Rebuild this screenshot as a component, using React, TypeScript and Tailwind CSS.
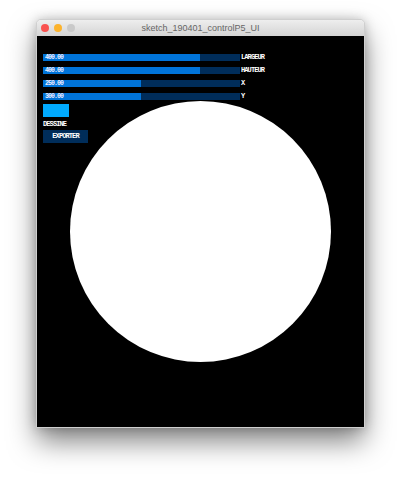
import React from 'react';

const SLIDERS = [
  { value: '400.00', label: 'LARGEUR', fill: 157 },
  { value: '400.00', label: 'HAUTEUR', fill: 157 },
  { value: '250.00', label: 'X', fill: 98 },
  { value: '300.00', label: 'Y', fill: 98 },
];

const labelText = "font-['Liberation_Mono',monospace] font-bold text-[7px] leading-[7px] tracking-[-0.9px] text-white";
const valueText = "font-['Liberation_Mono',monospace] font-bold text-[6.5px] leading-[7px] tracking-[-0.9px] text-[#eeeeff]";

const App = () => {
  return (
    <div className="w-[400px] h-[480px] bg-white overflow-hidden pt-[20px] pl-[37px]">
      {/* Window */}
      <div className="w-[327px] h-[407px] rounded-t-[4px] flex flex-col shadow-[0_14px_28px_rgba(0,0,0,0.5),0_0_12px_rgba(0,0,0,0.25)] outline outline-1 outline-[#cfcfcf]">
        {/* Title bar */}
        <div className="relative h-[16px] shrink-0 rounded-t-[4px] bg-gradient-to-b from-[#eeeeee] to-[#d4d4d4] flex items-center justify-center">
          <div className="absolute left-[4px] top-[4px] flex gap-[5px]">
            <span className="w-[8px] h-[8px] rounded-full bg-[#f9524f]" />
            <span className="w-[8px] h-[8px] rounded-full bg-[#fcb32c]" />
            <span className="w-[8px] h-[8px] rounded-full bg-[#c9c9c9]" />
          </div>
          <span className="font-['Liberation_Sans',sans-serif] text-[9px] leading-none text-[#666666]">
            sketch_190401_controlP5_UI
          </span>
        </div>

        {/* Canvas */}
        <div className="relative flex-1 bg-black pl-[6px] pt-[18px]">
          <div className="flex flex-col gap-[6px]">
            {SLIDERS.map((s) => (
              <div key={s.value + s.label} className="flex items-center gap-[1px] h-[7px]">
                <div className="w-[197px] h-[7px] bg-[#002d5a] relative">
                  <div className="h-full bg-[#0074d9]" style={{ width: s.fill }} />
                  <span className={`absolute left-[2px] top-0 ${valueText}`}>{s.value}</span>
                </div>
                <span className={labelText}>{s.label}</span>
              </div>
            ))}
          </div>

          <div className="mt-[4px] w-[26px] h-[13px] bg-[#00aaff]" />
          <div className={`mt-[4px] ${labelText}`}>DESSINE</div>
          <div className={`mt-[2px] w-[45px] h-[13px] bg-[#002d5a] flex items-center justify-center ${labelText}`}>
            EXPORTER
          </div>

          {/* Drawn ellipse */}
          <div className="absolute left-[33px] top-[65px] w-[261px] h-[261px] rounded-full bg-white" />
        </div>
      </div>
    </div>
  );
};

export default App;
